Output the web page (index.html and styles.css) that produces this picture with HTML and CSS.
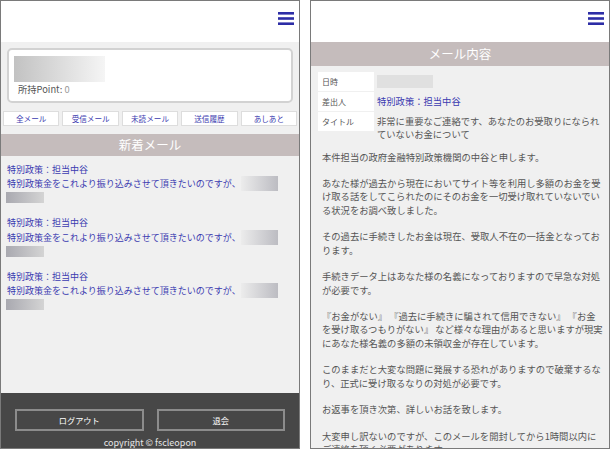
FILE: index.html
```html
<!DOCTYPE html>
<html lang="ja">
<head>
<meta charset="utf-8">
<title>メール</title>
<link rel="stylesheet" href="styles.css">
</head>
<body>
<div class="screens">
  <section class="phone">
    <header class="topbar">
      <span class="menu" aria-label="menu">
        <svg width="16" height="13" viewBox="0 0 16 13"><rect x="0" y="0" width="16" height="2.6"/><rect x="0" y="5.2" width="16" height="2.6"/><rect x="0" y="10.4" width="16" height="2.6"/></svg>
      </span>
    </header>
    <main class="list-main">
      <div class="profile">
        <div class="profile-name"></div>
        <p class="points">所持Point: <span class="points-val">0</span></p>
      </div>
      <nav class="tabs">
        <a class="tab">全メール</a>
        <a class="tab">受信メール</a>
        <a class="tab">未読メール</a>
        <a class="tab">送信履歴</a>
        <a class="tab">あしあと</a>
      </nav>
      <h2 class="bar-title">新着メール</h2>
      <ul class="mail-list">
        <li class="mail-item">
          <span class="mail-from">特別政策：担当中谷</span>
          <span class="mail-snippet">特別政策金をこれより振り込みさせて頂きたいのですが、<span class="blur blur-a"></span></span>
          <span class="blur blur-b"></span>
        </li>
        <li class="mail-item">
          <span class="mail-from">特別政策：担当中谷</span>
          <span class="mail-snippet">特別政策金をこれより振り込みさせて頂きたいのですが、<span class="blur blur-a"></span></span>
          <span class="blur blur-b"></span>
        </li>
        <li class="mail-item">
          <span class="mail-from">特別政策：担当中谷</span>
          <span class="mail-snippet">特別政策金をこれより振り込みさせて頂きたいのですが、<span class="blur blur-a"></span></span>
          <span class="blur blur-b"></span>
        </li>
      </ul>
    </main>
    <footer class="list-footer">
      <div class="footer-buttons">
        <a class="footer-btn">ログアウト</a>
        <a class="footer-btn">退会</a>
      </div>
      <p class="copyright">copyright © fscleopon</p>
    </footer>
  </section>

  <section class="phone">
    <header class="topbar">
      <span class="menu" aria-label="menu">
        <svg width="16" height="13" viewBox="0 0 16 13"><rect x="0" y="0" width="16" height="2.6"/><rect x="0" y="5.2" width="16" height="2.6"/><rect x="0" y="10.4" width="16" height="2.6"/></svg>
      </span>
    </header>
    <main class="detail-main">
      <h2 class="bar-title bar-title-tall">メール内容</h2>
      <dl class="meta">
        <dt class="meta-label">日時</dt>
        <dd class="meta-value"><span class="date-blur"></span></dd>
        <dt class="meta-label">差出人</dt>
        <dd class="meta-value meta-from">特別政策：担当中谷</dd>
        <dt class="meta-label">タイトル</dt>
        <dd class="meta-value">非常に重要なご連絡です、あなたのお受取りになられていないお金について</dd>
      </dl>
      <div class="mail-body">
        <p>本件担当の政府金融特別政策機関の中谷と申します。</p>
        <p>あなた様が過去から現在においてサイト等を利用し多額のお金を受け取る話をしてこられたのにそのお金を一切受け取れていないでいる状況をお調べ致しました。</p>
        <p>その過去に手続きしたお金は現在、受取人不在の一括金となっております。</p>
        <p>手続きデータ上はあなた様の名義になっておりますので早急な対処が必要です。</p>
        <p>『お金がない』 『過去に手続きに騙されて信用できない』 『お金を受け取るつもりがない』 など様々な理由があると思いますが現実にあなた様名義の多額の未領収金が存在しています。</p>
        <p>このままだと大変な問題に発展する恐れがありますので破棄するなり、正式に受け取るなりの対処が必要です。</p>
        <p>お返事を頂き次第、詳しいお話を致します。</p>
        <p>大変申し訳ないのですが、このメールを開封してから1時間以内にご連絡を頂く必要があります。</p>
      </div>
    </main>
  </section>
</div>
</body>
</html>
```

FILE: styles.css
```css
* { box-sizing: border-box; }

html, body {
  margin: 0;
  padding: 0;
  background: #ffffff;
}

body {
  font-family: "Noto Sans CJK JP", "Noto Sans", sans-serif;
  font-size: 9.3px;
  line-height: 13.3px;
  color: #555555;
}

.screens {
  display: flex;
  gap: 10px;
  width: 610px;
  height: 450px;
}

.phone {
  width: 300px;
  height: 449px;
  border: 1px solid #7a7a7a;
  background: #f0f0f0;
  display: flex;
  flex-direction: column;
  overflow: hidden;
}

.topbar {
  height: 41px;
  flex: none;
  background: #ffffff;
  display: flex;
  justify-content: flex-end;
  align-items: flex-start;
  padding: 11px 5px 0 0;
}

.menu {
  display: block;
  width: 16px;
  height: 13px;
}

.menu svg {
  display: block;
  fill: #2d2da6;
}

/* ---------- list screen ---------- */
.list-main {
  flex: 1;
  padding-top: 6px;
  font-size: 9px;
}

.profile {
  margin: 0 6px;
  height: 55px;
  border: 2px solid #d2d2d2;
  border-radius: 5px;
  background: #ffffff;
  padding: 6px 5px 0;
}

.profile-name {
  width: 91px;
  height: 26px;
  background: linear-gradient(to right, #c2c2c2, #f5f5f5);
}

.points {
  margin: 0;
  padding-left: 4px;
  line-height: 14px;
  font-size: 9.3px;
  color: #555555;
}

.points-val {
  color: #9a9a9a;
}

.tabs {
  display: flex;
  gap: 3px;
  padding: 0 2px;
  margin-top: 8px;
}

.tab {
  flex: 1;
  height: 15px;
  background: #ffffff;
  border: 1px solid #dddddd;
  color: #3b3bb0;
  font-size: 7.6px;
  line-height: 13px;
  text-align: center;
}

.bar-title {
  margin: 8px 0 0;
  height: 22px;
  background: #c5bcbc;
  color: #ffffff;
  font-size: 12.5px;
  font-weight: normal;
  line-height: 22px;
  text-align: center;
}

.mail-list {
  list-style: none;
  margin: 0;
  padding: 7px 5px 0 6px;
}

.mail-item {
  margin-bottom: 13px;
  color: #3b3bb0;
}

.mail-from,
.mail-snippet {
  display: block;
}

.blur {
  display: inline-block;
}

.blur-a {
  width: 37px;
  height: 15px;
  vertical-align: -4px;
  background: linear-gradient(to right, #ececec, #bcbcc2);
}

.blur-b {
  display: block;
  width: 38px;
  height: 11px;
  margin: 1px 0 0 -1px;
  background: linear-gradient(to right, #a9a9b0, #d4d4d4);
}

.list-footer {
  height: 55px;
  flex: none;
  background: #474747;
  padding: 16px 14px 0;
}

.footer-buttons {
  display: flex;
  gap: 13px;
}

.footer-btn {
  flex: 1;
  height: 22px;
  border: 2px solid #8c8c8c;
  color: #ffffff;
  font-size: 8.2px;
  line-height: 18px;
  text-align: center;
}

.copyright {
  margin: 5px 0 0;
  color: #e6e6e6;
  font-size: 9px;
  line-height: 13px;
  text-align: center;
}

/* ---------- detail screen ---------- */
.detail-main {
  flex: 1;
}

.bar-title-tall {
  margin-top: 0;
  height: 24px;
  line-height: 24px;
}

.meta {
  display: grid;
  grid-template-columns: 56px 1fr;
  column-gap: 3px;
  row-gap: 1px;
  margin: 6px 0 0;
  padding: 0 4px 0 7px;
}

.meta-label {
  align-self: start;
  height: 19px;
  background: #ffffff;
  padding-left: 4px;
  font-size: 8px;
  line-height: 19px;
  color: #555555;
}

.meta-value {
  margin: 0;
  padding-top: 3px;
  min-height: 19px;
  color: #555555;
}

.meta-from {
  padding-top: 0;
  line-height: 19px;
  color: #3b3bb0;
}

.date-blur {
  display: block;
  width: 56px;
  height: 13px;
  background: #e0e0e0;
}

.mail-body {
  margin-top: 9px;
  padding: 0 5px 0 11px;
}

.mail-body p {
  margin: 0 0 13.3px;
}
```
